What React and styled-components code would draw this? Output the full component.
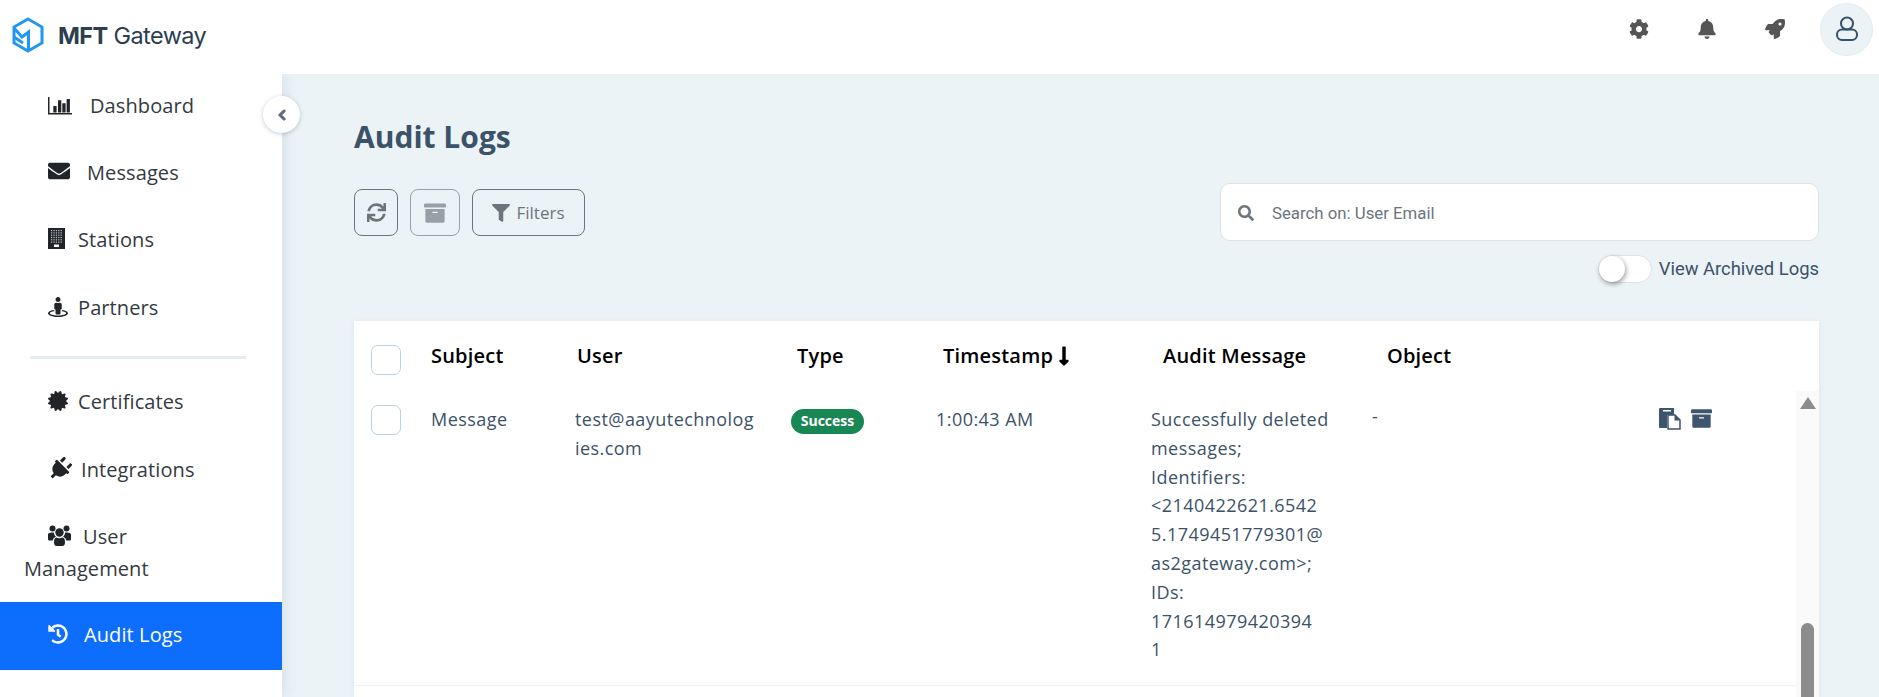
import React from "react";
import styled, { createGlobalStyle } from "styled-components";
import {
  FaEnvelope,
  FaStreetView,
  FaCertificate,
  FaPlug,
  FaHistory,
  FaCog,
  FaBell,
  FaRocket,
  FaSync,
  FaArchive,
  FaFilter,
  FaSearch,
  FaLongArrowAltDown,
  FaChevronLeft,
} from "react-icons/fa";

const GlobalStyle = createGlobalStyle`
  html, body { margin: 0; padding: 0; height: 100%; }
  body { font-family: "Open Sans", "Noto Sans", sans-serif; color: #212529; background: #fff; }
  * { box-sizing: border-box; }
`;

const Shell = styled.div`
  height: 100vh;
  display: flex;
  flex-direction: column;
  overflow: hidden;
`;

const TopBar = styled.header`
  height: 74px;
  flex: none;
  display: flex;
  align-items: center;
  justify-content: space-between;
  padding: 0 6px 0 12px;
  background: #fff;
  position: relative;
  z-index: 3;
`;

const Brand = styled.div`
  display: flex;
  align-items: center;
  gap: 14px;
  margin-top: -4px;
`;

const BrandName = styled.span`
  font-family: Inter, sans-serif;
  font-size: 23.5px;
  letter-spacing: -0.6px;
  color: #2c3e50;
  strong { font-weight: 700; }
`;

const TopActions = styled.div`
  display: flex;
  align-items: center;
  margin-top: -16px;
`;

const TopIcon = styled.span`
  width: 68px;
  display: flex;
  justify-content: center;
  color: #555;
  font-size: 20px;
`;

const Avatar = styled.div`
  width: 53px;
  height: 53px;
  margin-left: 11px;
  border-radius: 50%;
  background: #ecf3f7;
  border: 1px solid #e4ebef;
  display: flex;
  align-items: center;
  justify-content: center;
`;

const Body = styled.div`
  flex: 1;
  min-height: 0;
  display: flex;
  position: relative;
`;

const Sidebar = styled.nav`
  width: 282px;
  flex: none;
  margin-top: -1px;
  background: #fff;
  box-shadow: 2px 0 14px rgba(60, 80, 110, 0.12);
  z-index: 1;
`;

const NavItem = styled.div`
  padding: 16.7px 48px ${(p) => (p.$tight ? "17.5px" : "18.7px")} 24px;
  font-size: 20px;
  letter-spacing: 0.1px;
  line-height: 32px;
  color: ${(p) => (p.$active ? "#fff" : "#343a40")};
  background: ${(p) => (p.$active ? "#0d6efd" : "transparent")};
`;

const NavIcon = styled.span`
  display: inline-block;
  width: ${(p) => p.$w}px;
  height: 20px;
  margin-left: 24px;
  font-size: ${(p) => p.$size || 20}px;
  line-height: 1;
  vertical-align: -2px;
  color: ${(p) => (p.$active ? "#fff" : "#212529")};
`;

const PlugGlyph = styled(FaPlug)`
  transform: translateY(2px) rotate(45deg);
`;

const Divider = styled.hr`
  margin: 13px 36px 11px 30px;
  border: 0;
  height: 3px;
  background: #e3ecf1;
`;

const CollapseButton = styled.button`
  position: absolute;
  left: 263px;
  top: 22px;
  width: 37px;
  height: 37px;
  z-index: 2;
  padding: 0;
  border: 0;
  border-radius: 50%;
  background: #fff;
  color: #5b6b82;
  font-size: 12px;
  box-shadow: 0 1px 4px rgba(60, 80, 110, 0.3);
  display: flex;
  align-items: center;
  justify-content: center;
`;

const Main = styled.main`
  flex: 1;
  min-width: 0;
  display: flex;
  flex-direction: column;
  padding: 44px 60px 0 72px;
  background: #ecf3f7;
`;

const Title = styled.h1`
  margin: 0 0 27px;
  font-size: 30px;
  line-height: 38px;
  font-weight: 700;
  color: #3b5268;
`;

const Toolbar = styled.div`
  display: flex;
  justify-content: space-between;
  align-items: flex-start;
`;

const ButtonGroup = styled.div`
  display: flex;
  gap: 12px;
  padding-top: 6px;
`;

const ToolButton = styled.button`
  height: 47px;
  width: ${(p) => p.$width}px;
  padding: 0;
  border: 1px solid #6c757d;
  border-radius: 8px;
  background: transparent;
  color: #6c757d;
  opacity: ${(p) => (p.$disabled ? 0.65 : 1)};
  font-family: inherit;
  font-size: 17px;
  display: flex;
  align-items: center;
  justify-content: center;
  gap: 6px;
`;

const SearchColumn = styled.div`
  width: 599px;
  display: flex;
  flex-direction: column;
  align-items: flex-end;
`;

const SearchBox = styled.div`
  width: 100%;
  height: 58px;
  display: flex;
  align-items: center;
  gap: 18px;
  padding: 2px 0 0 17px;
  background: #fff;
  border: 1px solid #dee2e6;
  border-radius: 10px;
  color: #6c757d;
  font-family: Roboto, sans-serif;
  font-size: 16.8px;
`;

const ToggleRow = styled.div`
  margin-top: 14px;
  display: flex;
  align-items: center;
  gap: 7px;
  color: #3b5268;
  font-family: Roboto, sans-serif;
  font-size: 18.4px;
  line-height: 26px;
`;

const Toggle = styled.span`
  width: 54px;
  height: 28px;
  border: 1px solid #dee2e6;
  border-radius: 14px;
  background: #fff;
  display: flex;
`;

const Knob = styled.span`
  width: 26px;
  height: 26px;
  border-radius: 50%;
  background: #fff;
  box-shadow: 1px 2px 5px rgba(0, 0, 0, 0.4);
`;

const Card = styled.section`
  flex: 1;
  min-height: 0;
  margin-top: 38px;
  background: #fff;
  box-shadow: 0 1px 6px rgba(60, 80, 110, 0.08);
  overflow: hidden;
`;

const HeadRow = styled.div`
  height: 70px;
  padding: 19px 0 0 17px;
  display: grid;
  grid-template-columns: 60px 146px 220px 146px 220px 224px 1fr;
  font-size: 20px;
  letter-spacing: 0.2px;
  line-height: 32px;
  font-weight: 600;
  color: #000;
`;

const SortArrow = styled(FaLongArrowAltDown)`
  vertical-align: -4px;
`;

const Check = styled.span`
  display: block;
  width: 30px;
  height: 30px;
  margin-top: ${(p) => p.$offset || 0}px;
  border: 1px solid #bcd0e0;
  border-radius: 7px;
  background: #fff;
`;

const Scroller = styled.div`
  display: flex;
  height: 100%;
`;

const Rows = styled.div`
  flex: 1;
  min-width: 0;
`;

const Row = styled.div`
  padding: 14px 0 21px 17px;
  display: grid;
  grid-template-columns: 60px 144px 216px 145px 215px 221px 287px 1fr;
  font-size: 18px;
  letter-spacing: 0.45px;
  line-height: 28.8px;
  color: #3b5268;
  border-bottom: 1px solid #f1f3f5;
`;

const Dash = styled.span`
  margin-top: -3px;
`;

const Badge = styled.span`
  display: inline-flex;
  align-items: center;
  justify-content: center;
  width: 73px;
  height: 25px;
  margin-top: 3px;
  border-radius: 13px;
  background: #198754;
  color: #fff;
  font-size: 14px;
  letter-spacing: 0;
  font-weight: 700;
`;

const RowActions = styled.div`
  display: flex;
  gap: 10px;
  padding-top: 3px;
  color: #3d566e;
  font-size: 21px;
`;

const Scrollbar = styled.div`
  width: 23px;
  flex: none;
  background: #fafafa;
  display: flex;
  flex-direction: column;
  align-items: center;
  padding-top: 6px;
`;

const ScrollUp = styled.span`
  width: 0;
  height: 0;
  border-left: 8px solid transparent;
  border-right: 8px solid transparent;
  border-bottom: 12px solid #8c8c8c;
`;

const ScrollThumb = styled.span`
  width: 13px;
  height: 200px;
  flex: none;
  margin-top: 214px;
  border-radius: 7px;
  background: #8c8c8c;
`;

function Logo() {
  return (
    <svg width="32" height="36" viewBox="0 0 32 36" fill="none" stroke="#2196f3" strokeWidth="3">
      <path d="M16 2 30 10V26L16 34 2 26V10Z" />
      <path d="M2 11 10 20 16.500 15V33M2 20 11 26" />
    </svg>
  );
}

function BarsIcon() {
  return (
    <svg width="24" height="18" viewBox="0 0 24 18" fill="#212529">
      <path d="M0 0h1.500v16H24v1.600H0z" />
      <path d="M5.300 9h3.300v6.500H5.300zM10 3.300h3.300v12.200H10zM14.300 6.300h3.300v9.200h-3.300zM18.600 2h3.300v13.500h-3.300z" />
    </svg>
  );
}

function BuildingIcon() {
  const windows = [];
  for (let row = 0; row < 6; row++) {
    for (let col = 0; col < 5; col++) {
      windows.push(
        <rect key={`${row}-${col}`} x={3 + col * 2.4} y={2 + row * 2.3} width="1.200" height="1.200" fill="#c4c8cc" />
      );
    }
  }
  return (
    <svg width="17" height="21" viewBox="0 0 17 21" fill="#212529" style={{ marginTop: -3 }}>
      <rect width="17" height="21" />
      {windows}
      <rect x="6" y="16.500" width="5" height="2.500" fill="#fff" />
    </svg>
  );
}

function UsersIcon() {
  return (
    <svg width="23" height="21" viewBox="0 0 23 21" fill="#212529" style={{ marginTop: -2 }}>
      <circle cx="4.500" cy="3.500" r="3" />
      <circle cx="18.500" cy="3.500" r="3" />
      <circle cx="11.500" cy="7.500" r="4.200" />
      <path d="M0 9.500C0 8 2 7.200 5.800 7.600 6.100 9.500 6.800 10.800 8 11.800 6 12.500 5 14 4.800 15.500H1.500C.500 15.500 0 15 0 14z" />
      <path d="M23 9.500C23 8 21 7.200 17.200 7.600 16.900 9.500 16.200 10.800 15 11.800 17 12.500 18 14 18.200 15.500H21.500C22.500 15.500 23 15 23 14z" />
      <path d="M8.500 12.500C10 13.400 13 13.400 14.500 12.500 16.500 12.800 17 14.500 17 17.500 17 19.500 16 21 14.500 21H8.500C7 21 6 19.500 6 17.500 6 14.500 6.500 12.800 8.500 12.500z" />
    </svg>
  );
}

function PasteIcon() {
  return (
    <svg width="22" height="22" viewBox="0 0 22 22">
      <path d="M1 0h14l0 7H8v13H1a1 1 0 0 1-1-1V1a1 1 0 0 1 1-1z" fill="#3d566e" />
      <rect x="4" y="2" width="8" height="1.500" fill="#fff" />
      <path d="M9 7h7l5 5v9H9z" fill="#fff" stroke="#3d566e" strokeWidth="1.500" />
      <path d="M15.500 7v5.500H21" fill="#3d566e" />
    </svg>
  );
}

function UserOutline() {
  return (
    <svg width="24" height="26" viewBox="0 0 24 26" fill="none" stroke="#34506b" strokeWidth="2">
      <circle cx="12" cy="7.500" r="6" />
      <rect x="2" y="13.500" width="20" height="10.500" rx="5" />
    </svg>
  );
}

const navTop = [
  { label: "Dashboard", w: 42, icon: <BarsIcon /> },
  { label: "Messages", w: 39, icon: <FaEnvelope />, size: 22 },
  { label: "Stations", w: 30, icon: <BuildingIcon /> },
  { label: "Partners", w: 30, icon: <FaStreetView /> },
];

const navBottom = [
  { label: "Certificates", w: 30, icon: <FaCertificate /> },
  { label: "Integrations", w: 33, icon: <PlugGlyph />, size: 24 },
  { label: "User Management", w: 35, icon: <UsersIcon />, tight: true },
  { label: "Audit Logs", w: 36, icon: <FaHistory />, active: true },
];

function NavEntry({ item }) {
  return (
    <NavItem $active={item.active} $tight={item.tight}>
      <NavIcon $w={item.w} $size={item.size} $active={item.active}>{item.icon}</NavIcon>
      {item.label}
    </NavItem>
  );
}

export default function App() {
  return (
    <Shell>
      <GlobalStyle />
      <TopBar>
        <Brand>
          <Logo />
          <BrandName><strong>MFT</strong> Gateway</BrandName>
        </Brand>
        <TopActions>
          <TopIcon><FaCog /></TopIcon>
          <TopIcon><FaBell /></TopIcon>
          <TopIcon><FaRocket /></TopIcon>
          <Avatar><UserOutline /></Avatar>
        </TopActions>
      </TopBar>
      <Body>
        <Sidebar>
          {navTop.map((item) => <NavEntry key={item.label} item={item} />)}
          <Divider />
          {navBottom.map((item) => <NavEntry key={item.label} item={item} />)}
        </Sidebar>
        <CollapseButton><FaChevronLeft stroke="currentColor" strokeWidth="50" /></CollapseButton>
        <Main>
          <Title>Audit Logs</Title>
          <Toolbar>
            <ButtonGroup>
              <ToolButton $width={44}><FaSync size={19} /></ToolButton>
              <ToolButton $width={50} $disabled><FaArchive size={22} /></ToolButton>
              <ToolButton $width={113}><FaFilter size={18} />Filters</ToolButton>
            </ButtonGroup>
            <SearchColumn>
              <SearchBox><FaSearch size={16} />Search on: User Email</SearchBox>
              <ToggleRow>
                <Toggle><Knob /></Toggle>
                View Archived Logs
              </ToggleRow>
            </SearchColumn>
          </Toolbar>
          <Card>
            <HeadRow>
              <Check $offset={5} />
              <span>Subject</span>
              <span>User</span>
              <span>Type</span>
              <span>Timestamp<SortArrow size={22} /></span>
              <span>Audit Message</span>
              <span>Object</span>
            </HeadRow>
            <Scroller>
              <Rows>
                <Row>
                  <Check />
                  <span>Message</span>
                  <span>test@aayutechnolog<br />ies.com</span>
                  <span><Badge>Success</Badge></span>
                  <span>1:00:43 AM</span>
                  <span>
                    Successfully deleted<br />
                    messages;<br />
                    Identifiers:<br />
                    &lt;2140422621.6542<br />
                    5.1749451779301@<br />
                    as2gateway.com&gt;;<br />
                    IDs:<br />
                    171614979420394<br />
                    1
                  </span>
                  <Dash>-</Dash>
                  <RowActions>
                    <PasteIcon />
                    <FaArchive />
                  </RowActions>
                </Row>
              </Rows>
              <Scrollbar>
                <ScrollUp />
                <ScrollThumb />
              </Scrollbar>
            </Scroller>
          </Card>
        </Main>
      </Body>
    </Shell>
  );
}
